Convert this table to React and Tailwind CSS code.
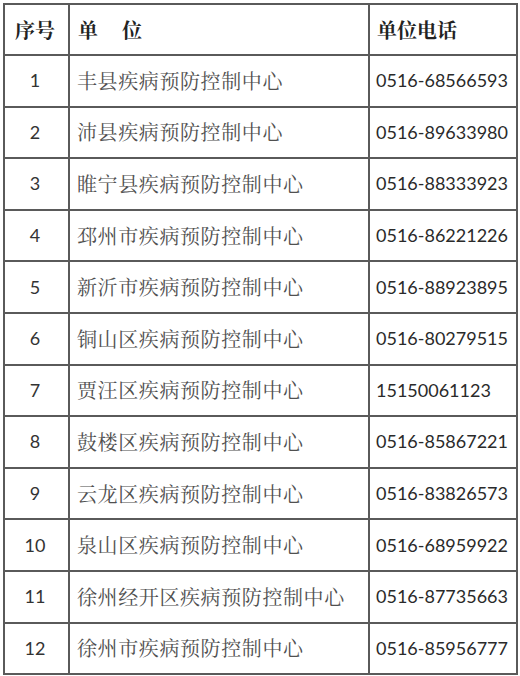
import React from "react";

const rows = [
  ["1", "丰县疾病预防控制中心", "0516-68566593"],
  ["2", "沛县疾病预防控制中心", "0516-89633980"],
  ["3", "睢宁县疾病预防控制中心", "0516-88333923"],
  ["4", "邳州市疾病预防控制中心", "0516-86221226"],
  ["5", "新沂市疾病预防控制中心", "0516-88923895"],
  ["6", "铜山区疾病预防控制中心", "0516-80279515"],
  ["7", "贾汪区疾病预防控制中心", "15150061123"],
  ["8", "鼓楼区疾病预防控制中心", "0516-85867221"],
  ["9", "云龙区疾病预防控制中心", "0516-83826573"],
  ["10", "泉山区疾病预防控制中心", "0516-68959922"],
  ["11", "徐州经开区疾病预防控制中心", "0516-87735663"],
  ["12", "徐州市疾病预防控制中心", "0516-85956777"],
];

const serif = "font-['Noto_Serif_CJK_SC','Noto_Serif_SC','Liberation_Serif','Noto_Sans_CJK_SC',serif]";
const num = "font-['Lato','Open_Sans','Noto_Sans_CJK_SC',sans-serif]";

export default function App() {
  return (
    <div className="w-[520px] h-[676px] bg-white pt-[3px] pl-[3px]">
      <table className="border-collapse border-2 border-[#3a3a3a] w-[513px] table-fixed">
        <colgroup>
          <col className="w-[65px]" />
          <col className="w-[300px]" />
          <col className="w-[148px]" />
        </colgroup>
        <thead>
          <tr className="h-[51px]">
            <th className={`border-2 border-[#5a5a5a] text-[20px] font-bold text-[#222] text-center pr-[3px] ${serif}`}>序号</th>
            <th className={`border-2 border-[#5a5a5a] text-[20px] font-bold text-[#222] text-left pl-[8px] ${serif}`}>
              单<span className="inline-block w-[24px]"></span>位
            </th>
            <th className={`border-2 border-[#5a5a5a] text-[20px] font-bold text-[#222] text-left pl-[7px] ${serif}`}>单位电话</th>
          </tr>
        </thead>
        <tbody>
          {rows.map(([n, name, tel]) => (
            <tr key={n} className="h-[51.6px]">
              <td className={`border-2 border-[#5a5a5a] text-center pr-[3px] text-[18px] text-[#333] ${num}`}>{n}</td>
              <td className={`border-2 border-[#5a5a5a] text-left pl-[7px] text-[20px] tracking-[0.6px] text-[#505050] whitespace-nowrap ${serif}`}>{name}</td>
              <td className={`border-2 border-[#5a5a5a] text-left pl-[6px] text-[18px] text-[#2a2a2a] whitespace-nowrap ${num}`}>{tel}</td>
            </tr>
          ))}
        </tbody>
      </table>
    </div>
  );
}
